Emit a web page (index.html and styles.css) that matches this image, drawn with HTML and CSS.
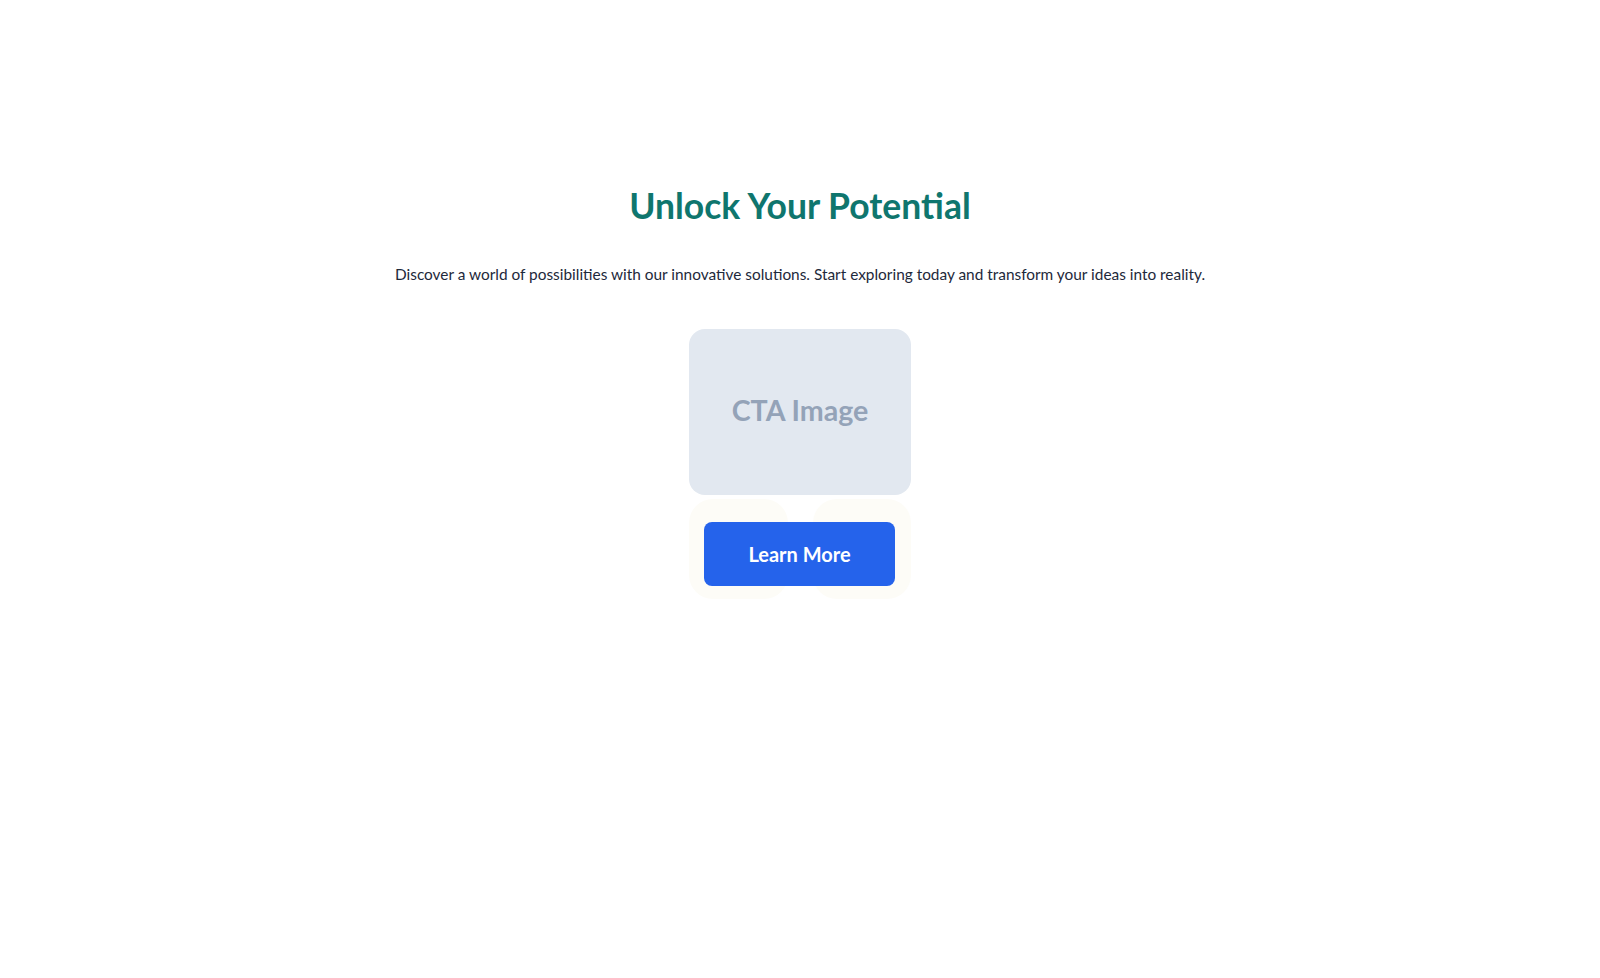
FILE: index.html
```html
<!DOCTYPE html>
<html lang="en">
<head>
	<meta charset="UTF-8">
	<title>Unlock Your Potential</title>
	<link rel="stylesheet" href="styles.css">
</head>
<body>
<section class="cta">
	<h1 class="cta-title">Unlock Your Potential</h1>
	<p class="cta-text">Discover a world of possibilities with our innovative solutions. Start exploring today and transform your ideas into reality.</p>
	<div class="cta-media">
		<div class="cta-image">CTA Image</div>
		<div class="cta-action">
			<div class="cta-tiles">
				<span class="tile"></span>
				<span class="tile"></span>
			</div>
			<a class="cta-button" href="#">Learn More</a>
		</div>
	</div>
</section>
</body>
</html>
```

FILE: styles.css
```css
* {
	padding: 0;
	margin: 0;
	box-sizing: border-box;
}

body {
	background-color: #ffffff;
	font-family: "Lato", "Noto Sans", sans-serif;
	color: #1e293b;
}

.cta {
	display: flex;
	flex-direction: column;
	align-items: center;
	padding-top: 182px;
}

.cta-title {
	font-size: 35.5px;
	line-height: 48px;
	font-weight: 700;
	color: #0f766e;
}

.cta-text {
	margin-top: 32px;
	font-size: 15.4px;
	line-height: 24px;
	color: #1e293b;
}

.cta-media {
	margin-top: 43px;
	width: 222px;
	display: flex;
	flex-direction: column;
	gap: 4px;
}

.cta-image {
	height: 166px;
	padding-bottom: 4px;
	border-radius: 16px;
	background-color: #e2e8f0;
	color: #94a3b8;
	font-size: 28.6px;
	font-weight: 700;
	display: flex;
	align-items: center;
	justify-content: center;
}

.cta-action {
	position: relative;
	height: 100px;
}

.cta-tiles {
	display: grid;
	grid-template-columns: 1fr 1fr;
	gap: 25px;
	height: 100%;
}

.tile {
	background-color: #fdfcf7;
	border-radius: 24px;
}

.cta-button {
	position: absolute;
	left: 15px;
	top: 23px;
	width: 191px;
	height: 64px;
	border-radius: 8px;
	background-color: #2563eb;
	color: #ffffff;
	font-size: 20px;
	font-weight: 700;
	text-decoration: none;
	display: flex;
	align-items: center;
	justify-content: center;
}
```
